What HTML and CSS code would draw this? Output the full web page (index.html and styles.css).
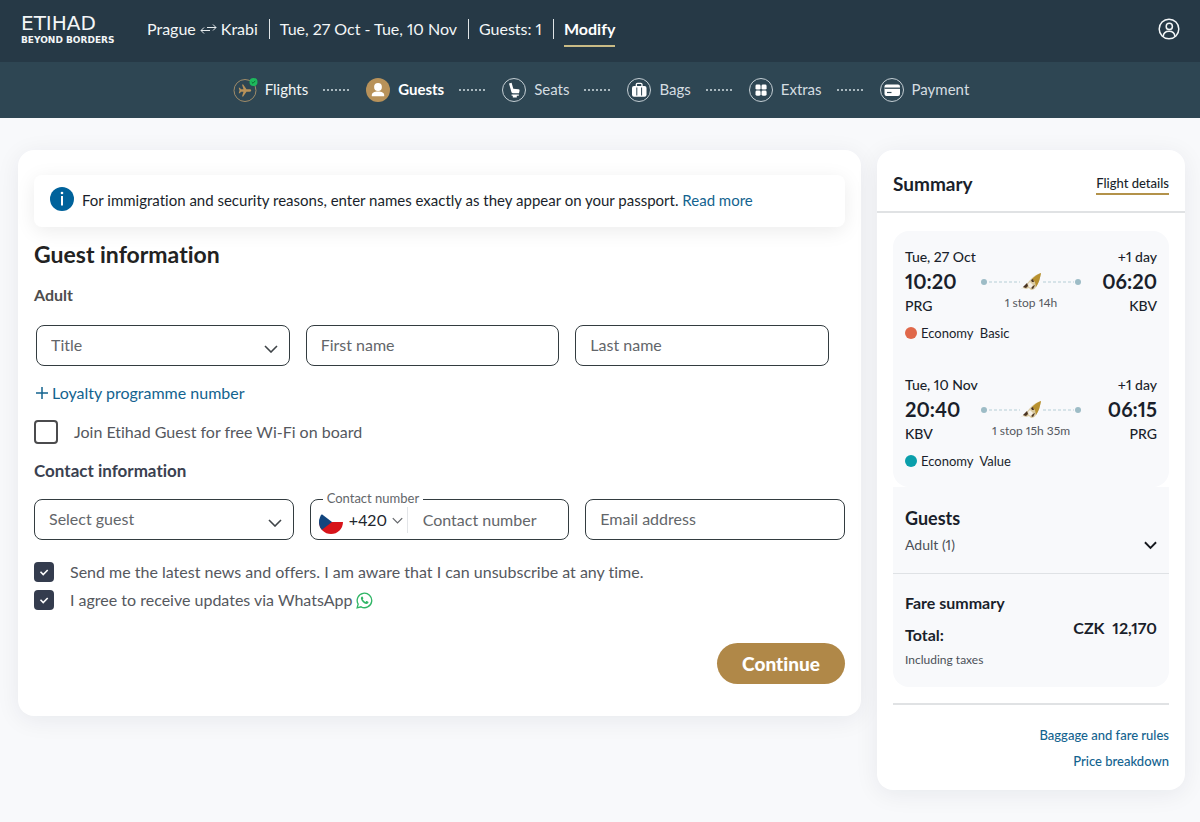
FILE: index.html
```html
<!DOCTYPE html>
<html lang="en">
<head>
<meta charset="utf-8">
<meta name="viewport" content="width=device-width, initial-scale=1">
<title>Guest information - Etihad</title>
<link rel="stylesheet" href="styles.css">
</head>
<body>
<header class="topbar">
  <a class="logo" href="#"><span class="logo-name">ETIHAD</span><span class="logo-tag">BEYOND BORDERS</span></a>
  <div class="trip">
    <span class="trip-item">Prague
      <svg class="swap" viewBox="0 0 17 12" width="17" height="12"><path d="M7 4.500h9M13 1.500l3 3-3 3M10 7.500H1M4 4.500l-3 3 3 3"/></svg>
      Krabi</span>
    <span class="trip-item">Tue, 27 Oct - Tue, 10 Nov</span>
    <span class="trip-item">Guests: 1</span>
    <span class="trip-item"><a class="modify" href="#">Modify</a></span>
  </div>
  <button class="profile" type="button" aria-label="Profile">
    <svg viewBox="0 0 22 22" width="22" height="22"><circle cx="11" cy="11" r="9.800"/><circle cx="11.300" cy="8.400" r="3.100"/><path d="M5.200 18.500c.3-3.700 2.700-5.200 5.900-5.200s5.500 1.500 5.800 5.200"/></svg>
  </button>
</header>

<nav class="steps" aria-label="Booking steps">
  <ol class="step-list">
    <li class="step done">
      <svg class="step-icon" viewBox="0 0 24 24" width="24" height="24"><circle class="ring gold" cx="12" cy="12.500" r="11"/><path class="gold-fill" d="M18.200 12.500c0 .8-.8 1.200-1.600 1.200h-3.100L10.200 18.600H9l1.500-4.900H8l-1.200 1.600H5.700l.8-2.800-.8-2.800h1.100L8 11.300h2.500L9 6.400h1.200l3.300 4.900h3.100c.8 0 1.600.4 1.600 1.200z"/><circle cx="20.500" cy="4" r="4" fill="#1db85c"/><path d="M18.700 4l1.300 1.300 2.300-2.500" fill="none" stroke="#0d6b35" stroke-width="1"/></svg>
      <a class="step-name" href="#">Flights</a></li>
    <li class="step current" aria-current="step">
      <svg class="step-icon" viewBox="0 0 24 24" width="24" height="24"><circle cx="12" cy="12" r="12" fill="#b8925a"/><circle cx="12" cy="9" r="3.900" fill="#fff"/><path d="M5.800 18.300v-1.200c0-2.400 2.400-3.600 6.200-3.600s6.200 1.200 6.200 3.600v1.200z" fill="#fff"/></svg>
      <span class="step-name">Guests</span></li>
    <li class="step">
      <svg class="step-icon" viewBox="0 0 24 24" width="24" height="24"><circle class="ring" cx="12" cy="12" r="11.500"/><path d="M7 5.500l2.600-.7 1.700 5.900 5.300.6c.9.100 1.100.9.900 1.600l-.5 2.300H10.900c-.9 0-1.300-.5-1.500-1.200zM9.600 16.500h7.200v1.200h-2v1.800h-4v-1.800H9.600z" fill="#fff"/></svg>
      <span class="step-name">Seats</span></li>
    <li class="step">
      <svg class="step-icon" viewBox="0 0 24 24" width="24" height="24"><circle class="ring" cx="12" cy="12" r="11.500"/><rect x="5" y="8" width="14.500" height="10.800" rx="2" fill="#fff"/><path d="M9.300 8V6.600c0-.7.5-1.200 1.200-1.200h3.300c.7 0 1.200.5 1.200 1.200V8" fill="none" stroke="#fff" stroke-width="1.300"/><path d="M9.800 9.500v8M14.600 9.500v8" stroke="#2e4653" stroke-width="1"/></svg>
      <span class="step-name">Bags</span></li>
    <li class="step">
      <svg class="step-icon" viewBox="0 0 24 24" width="24" height="24"><circle class="ring" cx="12" cy="12" r="11.500"/><g fill="#fff"><rect x="6.500" y="6.500" width="5.100" height="5.100" rx="1.400"/><rect x="12.500" y="6.500" width="5.100" height="5.100" rx="1.400"/><rect x="6.500" y="12.600" width="5.100" height="5.100" rx="1.400"/><rect x="12.500" y="12.600" width="5.100" height="5.100" rx="1.400"/></g></svg>
      <span class="step-name">Extras</span></li>
    <li class="step">
      <svg class="step-icon" viewBox="0 0 24 24" width="24" height="24"><circle class="ring" cx="12" cy="12" r="11.500"/><rect x="4.500" y="6.500" width="15.500" height="11.500" rx="2" fill="#fff"/><path d="M4.500 10.200H20" stroke="#2e4653" stroke-width="1.300"/><path d="M7 14.500h4.500" stroke="#2e4653" stroke-width="1.200"/></svg>
      <span class="step-name">Payment</span></li>
  </ol>
</nav>

<div class="page">
  <main class="card">
    <div class="notice">
      <svg class="notice-icon" viewBox="0 0 24 24" width="24" height="24"><circle cx="12" cy="12" r="12" fill="#00629b"/><circle cx="12" cy="6" r="1.300" fill="#fff"/><path d="M12 9v9.500" stroke="#fff" stroke-width="2"/></svg>
      <p class="notice-text">For immigration and security reasons, enter names exactly as they appear on your passport. <a class="link" href="#">Read more</a></p>
    </div>
    <form class="form">
      <h1 class="title">Guest information</h1>
      <h2 class="subtitle adult">Adult</h2>
      <div class="fields inset">
        <div class="picker">
          <select class="field" aria-label="Title"><option>Title</option></select>
          <svg class="chevron" viewBox="0 0 14 8" width="14" height="8"><path d="M1 1l6 6 6-6"/></svg>
        </div>
        <input class="field" type="text" aria-label="First name" placeholder="First name">
        <input class="field" type="text" aria-label="Last name" placeholder="Last name">
      </div>
      <button class="loyalty" type="button"><svg viewBox="0 0 12 12" width="12" height="12"><path d="M6 0v12M0 6h12"/></svg>Loyalty programme number</button>
      <label class="join"><input class="box" type="checkbox"><span>Join Etihad Guest for free Wi-Fi on board</span></label>
      <h2 class="subtitle contact">Contact information</h2>
      <div class="fields">
        <div class="picker">
          <select class="field" aria-label="Guest"><option>Select guest</option></select>
          <svg class="chevron" viewBox="0 0 14 8" width="14" height="8"><path d="M1 1l6 6 6-6"/></svg>
        </div>
        <div class="phone">
          <label class="phone-label" for="phone">Contact number</label>
          <svg class="flag" viewBox="0 0 24 24" width="24" height="24"><defs><clipPath id="disc"><circle cx="12" cy="12" r="12"/></clipPath></defs><g clip-path="url(#disc)"><path fill="#fff" d="M0 0h24v12H0z"/><path fill="#d7141a" d="M0 12h24v12H0z"/><path fill="#11457e" d="M0 2l13 10L0 22z"/></g></svg>
          <div class="picker dial">
            <select class="dial-code" aria-label="Country code"><option>+420</option></select>
            <svg class="chevron" viewBox="0 0 14 8" width="11" height="7"><path d="M1 1l6 6 6-6"/></svg>
          </div>
          <input class="phone-input" id="phone" type="tel" placeholder="Contact number">
        </div>
        <input class="field" type="email" aria-label="Email address" placeholder="Email address">
      </div>
      <div class="consents">
        <label class="consent"><input class="tick" type="checkbox" checked><span>Send me the latest news and offers. I am aware that I can unsubscribe at any time.</span></label>
        <label class="consent"><input class="tick" type="checkbox" checked><span>I agree to receive updates via WhatsApp</span>
          <svg class="whatsapp" viewBox="0 0 18 18" width="17" height="17"><path d="M1.200 16.800l1.100-4A7.700 7.700 0 1 1 5.300 15.700z" fill="none" stroke="#2fb565" stroke-width="1.400"/><path d="M6.200 4.800c-.8.500-1.200 1.300-.9 2.500.6 2.400 3.200 5 5.600 5.400 1 .1 2-.4 2.300-1.500.1-.4 0-.6-.3-.8l-1.500-.8c-.3-.1-.5 0-.7.200l-.6.8c-1.300-.5-2.400-1.500-3-2.800l.6-.8c.1-.2.1-.4 0-.6L7 5c-.2-.4-.5-.4-.8-.2z" fill="#2fb565"/></svg></label>
      </div>
      <button class="continue" type="submit">Continue</button>
    </form>
  </main>

  <aside class="summary">
    <div class="summary-head">
      <h2 class="summary-title">Summary</h2>
      <a class="details" href="#">Flight details</a>
    </div>
    <div class="summary-body">
      <section class="panel flights">
        <article class="flight">
          <span>Tue, 27 Oct</span><span class="end">+1 day</span>
          <strong class="time">10:20</strong>
          <svg class="route" viewBox="0 0 100 20" width="100" height="20"><circle cx="3" cy="10" r="3"/><circle cx="97" cy="10" r="3"/><path class="dash" d="M8 10h31M62 10h31"/><use href="#tail"/></svg>
          <strong class="time end">06:20</strong>
          <span>PRG</span><span class="stops">1 stop 14h</span><span class="end">KBV</span>
          <p class="cabin"><i class="dot basic"></i>Economy&nbsp; Basic</p>
        </article>
        <article class="flight">
          <span>Tue, 10 Nov</span><span class="end">+1 day</span>
          <strong class="time">20:40</strong>
          <svg class="route" viewBox="0 0 100 20" width="100" height="20"><circle cx="3" cy="10" r="3"/><circle cx="97" cy="10" r="3"/><path class="dash" d="M8 10h31M62 10h31"/>
            <g id="tail"><path fill="#d9c9a0" d="M38 18c5-2 8-7 12-11 3-3 6-5 10-6-1 5-2 10-5 14-1 2-3 3-5 3l-2-2-3 1-3-1z"/><path fill="#b8912f" d="M51 7c3-3 6-5 9-6-1 5-2 10-5 14l-1-5z"/><path fill="#4a3423" d="M42 15l4-4 1 3-2 2zM50 8l2-1 1 3-2 0zM52 14l2-1-2 4-2-1z"/><path fill="#f5efe4" d="M47 12l2-2 3 3-2 3-2-1z"/></g></svg>
          <strong class="time end">06:15</strong>
          <span>KBV</span><span class="stops">1 stop 15h 35m</span><span class="end">PRG</span>
          <p class="cabin"><i class="dot value"></i>Economy&nbsp; Value</p>
        </article>
      </section>
      <section class="panel totals">
        <div class="guests">
          <div><h3 class="guests-title">Guests</h3><p class="guests-count">Adult (1)</p></div>
          <button class="expand" type="button" aria-label="Show guests"><svg class="chevron" viewBox="0 0 14 9" width="13" height="9"><path d="M1 1l6 6 6-6"/></svg></button>
        </div>
        <div class="fare">
          <div><h3 class="fare-title">Fare summary</h3><p class="total">Total:</p><p class="taxes">Including taxes</p></div>
          <strong class="price">CZK&nbsp; 12,170</strong>
        </div>
      </section>
      <div class="links">
        <a class="link" href="#">Baggage and fare rules</a>
        <a class="link" href="#">Price breakdown</a>
      </div>
    </div>
  </aside>
</div>
</body>
</html>
```

FILE: styles.css
```css
* { box-sizing: border-box; }
body {
  margin: 0;
  min-height: 100vh;
  background: #f8f9fb;
  color: #1a1f2b;
  font: 16px/24px Lato, "Noto Sans", sans-serif;
  font-variant-numeric: proportional-nums;
  font-variant-ligatures: none;
}
h1, h2, h3, p, ol { margin: 0; padding: 0; }
ol { list-style: none; }
a { color: inherit; text-decoration: none; }
button { border: 0; padding: 0; background: none; font: inherit; color: inherit; cursor: pointer; }
svg { display: block; flex: none; }
input, select { font: inherit; margin: 0; }

.topbar {
  display: flex;
  align-items: center;
  min-height: 62px;
  padding: 0 20px 4px 21px;
  background: #263946;
  color: #f3f6f7;
}
.logo { display: flex; flex-direction: column; width: 126px; font-family: "DejaVu Sans", sans-serif; }
.logo-name { font-size: 20px; line-height: 23px; }
.logo-tag { font-size: 9px; line-height: 11px; font-weight: 700; white-space: nowrap; }
.trip { display: flex; align-items: center; flex: 1; }
.trip-item { display: flex; align-items: center; gap: 4px; white-space: nowrap; line-height: 20px; }
.trip-item + .trip-item { margin-left: 11px; padding-left: 10px; border-left: 1px solid #dfe4e6; }
.swap { fill: none; stroke: #e6ebed; stroke-width: 1; }
.modify { margin-bottom: -8px; padding-bottom: 6px; border-bottom: 2px solid #c9bb85; font-weight: 700; color: #fff; }
.profile svg { fill: none; stroke: #f3f6f7; stroke-width: 1.5; }

.steps { background: #2e4653; padding: 15px 14px 16px 16px; }
.step-list { display: flex; justify-content: center; }
.step { display: flex; align-items: center; gap: 8px; font-size: 15px; line-height: 25px; color: #d5dde1; }
.step + .step::before {
  content: "";
  width: 28px;
  height: 2px;
  margin: 0 7px 0 15px;
  background: repeating-linear-gradient(90deg, #a9b8bf 0 2px, transparent 2px 4px);
}
.step.done { color: #f3f6f7; }
.step.current { color: #fff; font-weight: 700; }
.step-icon { overflow: visible; }
.ring { fill: none; stroke: #c4ced3; stroke-width: 1; }
.ring.gold { stroke: #a08c69; }
.gold-fill { fill: #b8925a; }

.page {
  display: grid;
  grid-template-columns: minmax(0, 1fr) 308px;
  align-items: start;
  gap: 16px;
  padding: 32px 15px 32px 18px;
}
.card, .summary { background: #fff; border-radius: 16px; box-shadow: 0 4px 24px rgba(20, 30, 50, .07); }
.card { padding: 25px 16px 32px; }
.notice {
  display: flex;
  align-items: flex-start;
  gap: 8px;
  padding: 12px 16px 14px;
  border-radius: 8px;
  box-shadow: 0 4px 20px rgba(0, 0, 0, .08);
}
.notice-text { font-size: 15px; line-height: 26px; }
.link { color: #13638f; }

.form { display: flex; flex-direction: column; }
.title { margin-top: 13px; font-size: 23px; line-height: 28px; color: #222; }
.subtitle { font-size: 16px; color: #3a4150; }
.adult { margin-top: 15px; color: #4d4d4d; }
.contact { margin-top: 15px; font-size: 17px; }
.fields { display: grid; grid-template-columns: repeat(3, minmax(0, 1fr)); gap: 16px; margin-top: 16px; }
.inset { margin-top: 18px; padding: 0 16px 0 2px; }
.field {
  width: 100%;
  height: 41px;
  padding: 0 14px 2px;
  border: 1px solid #333c40;
  border-radius: 8px;
  background: #fff;
  color: #63666a;
  appearance: none;
}
::placeholder { color: #63666a; opacity: 1; }
.picker { display: grid; align-items: center; }
.picker > * { grid-area: 1 / 1; }
.chevron { fill: none; stroke: #3f4448; stroke-width: 1.6; }
.picker .chevron { justify-self: end; margin: 6px 12px 0 0; pointer-events: none; }
.loyalty { display: flex; align-items: center; gap: 4px; align-self: flex-start; margin: 15px 0 0 2px; color: #13638f; }
.loyalty svg { fill: none; stroke: #13638f; stroke-width: 1.5; }
.join { display: flex; align-items: center; gap: 16px; margin-top: 15px; color: #55585e; }
.box { appearance: none; width: 24px; height: 24px; border: 2px solid #4b4b4d; border-radius: 4px; background: #fff; }

.phone {
  position: relative;
  display: flex;
  align-items: center;
  height: 41px;
  padding: 0 8px;
  border: 1px solid #333c40;
  border-radius: 8px;
}
.phone-label { position: absolute; top: -10px; left: 12px; padding: 0 4px; background: #fff; font-size: 13px; line-height: 16px; color: #63666a; }
.flag { margin-top: 4px; }
.dial { border-right: 1px solid #e3e5e8; }
.dial .chevron { margin: 1px 4px 0 0; stroke: #63666a; }
.dial-code { width: 64px; height: 26px; padding: 0 0 0 6px; border: 0; background: none; color: #22262d; appearance: none; }
.phone-input { flex: 1; min-width: 0; height: 36px; padding: 0 0 0 15px; border: 0; background: none; }

.consents { display: flex; flex-direction: column; gap: 8px; margin-top: 22px; }
.consent { display: flex; align-items: center; gap: 4px; line-height: 20px; color: #55585e; }
.tick {
  appearance: none;
  width: 20px;
  height: 20px;
  margin-right: 12px;
  border-radius: 4px;
  background: #343c4e url("data:image/svg+xml,%3Csvg xmlns='http://www.w3.org/2000/svg' viewBox='0 0 20 20'%3E%3Cpath d='M6.500 9.800l2.700 2.700 4.500-4.500' fill='none' stroke='white' stroke-width='1.600'/%3E%3C/svg%3E");
}
.continue {
  align-self: flex-end;
  min-width: 128px;
  height: 41px;
  margin-top: 33px;
  border-radius: 21px;
  background: #b08848;
  color: #fff;
  font-size: 19px;
  font-weight: 900;
}

.summary-head { display: flex; align-items: center; justify-content: space-between; height: 63px; padding: 6px 16px 0; border-bottom: 2px solid #e0e2e4; }
.summary-title { font-size: 19px; }
.details { border-bottom: 2px solid #b3924a; font-size: 13px; line-height: 20px; font-weight: 500; }
.summary-body { padding: 18px 16px 16px; }
.panel { border-radius: 16px; background: #f8f9fb; }
.flights { display: grid; gap: 30px; padding: 14px 12px 16px; }
.flight { display: grid; grid-template-columns: 1fr 100px 1fr; align-items: center; font-size: 14px; line-height: 24px; font-weight: 500; }
.flight > span:nth-child(2) { grid-column: 2 / 4; }
.end { text-align: right; }
.time { font-size: 20px; line-height: 25px; }
.route { overflow: visible; fill: #9dbcc6; }
.dash { stroke: #b5ced6; stroke-width: 1; stroke-dasharray: 3 2; }
.stops { align-self: start; font-size: 12px; line-height: 18px; font-weight: 400; text-align: center; color: #55585e; }
.cabin { grid-column: 1 / 4; display: flex; align-items: center; gap: 4px; margin-top: 5px; font-size: 13px; line-height: 20px; font-weight: 400; }
.dot { width: 12px; height: 12px; border-radius: 50%; }
.basic { background: #e0684a; }
.value { background: #0a9fab; }
.totals { border-top-left-radius: 0; border-top-right-radius: 0; }
.guests { display: flex; align-items: flex-end; justify-content: space-between; padding: 17px 12px 15px; border-bottom: 1px solid #dfe2e5; }
.guests-title { font-size: 18px; line-height: 28px; }
.guests-count { font-size: 14px; line-height: 26px; color: #4b5058; }
.expand { padding: 8px 0; }
.expand .chevron { stroke: #15181d; stroke-width: 2; }
.fare { display: flex; align-items: center; justify-content: space-between; padding: 13px 12px 18px; }
.fare-title, .total { font-size: 16px; line-height: 32px; font-weight: 700; }
.taxes { font-size: 12px; line-height: 18px; color: #4b5058; }
.price { font-size: 16px; }
.links { display: flex; flex-direction: column; align-items: flex-end; margin-top: 16px; padding-top: 17px; border-top: 2px solid #e0e2e4; font-size: 13px; line-height: 26px; font-weight: 500; }
```
